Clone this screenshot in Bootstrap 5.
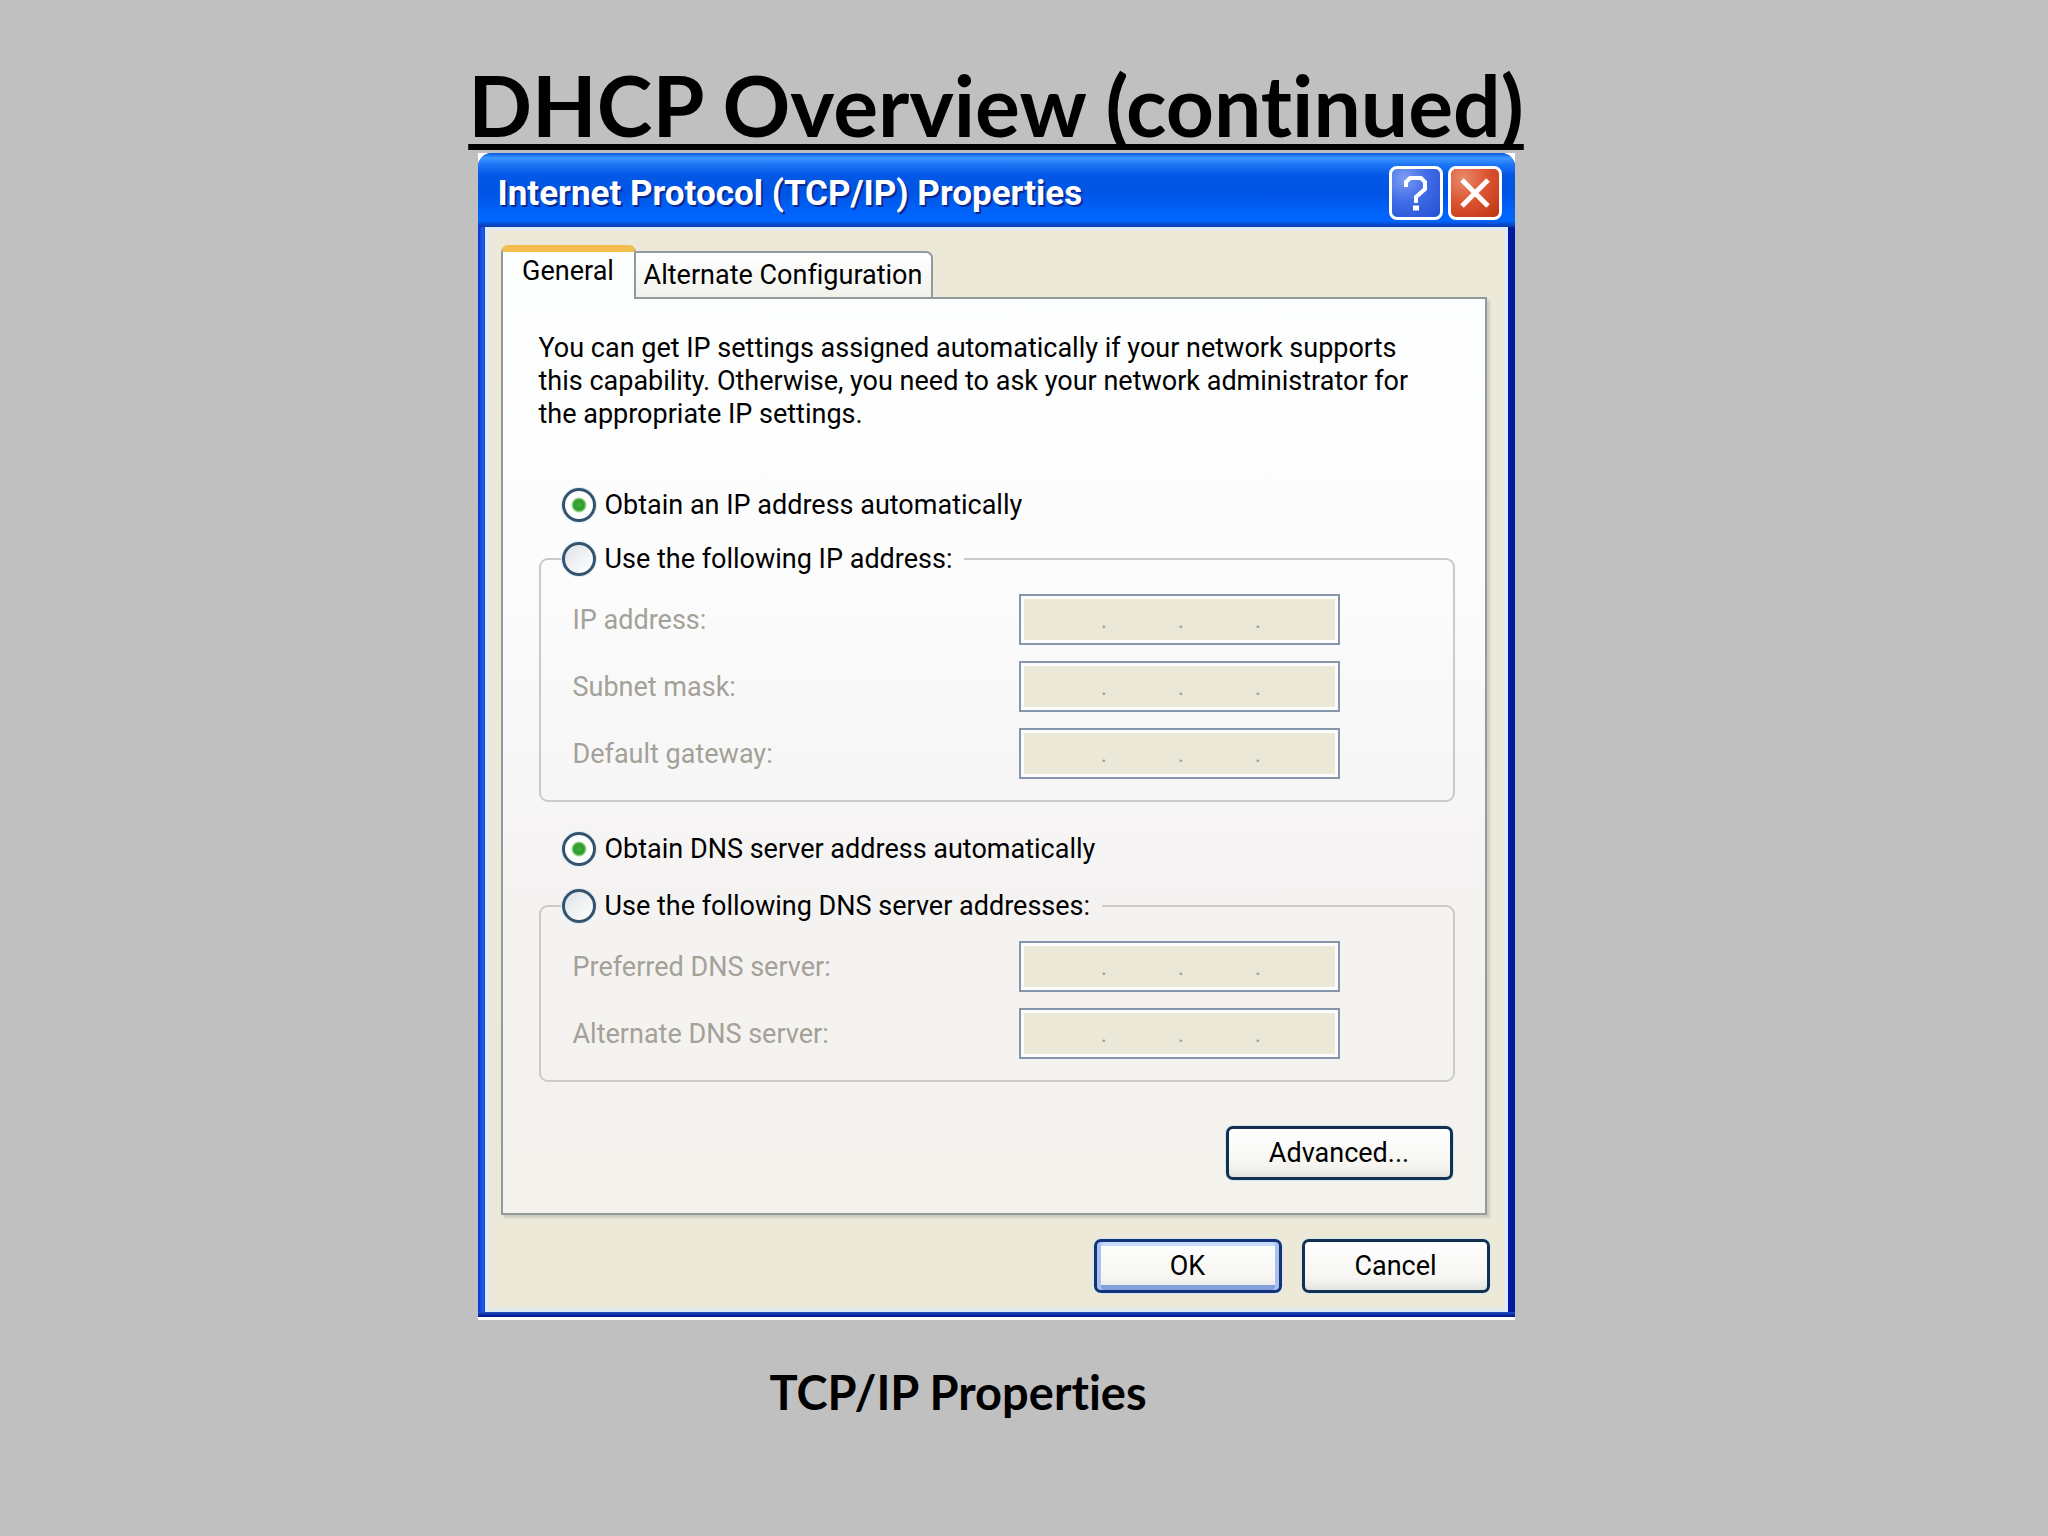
<!DOCTYPE html>
<html lang="en">
<head>
<meta charset="utf-8">
<meta name="viewport" content="width=device-width, initial-scale=1">
<title>DHCP Overview (continued)</title>
<link href="https://cdn.jsdelivr.net/npm/bootstrap@5.3.0/dist/css/bootstrap.min.css" rel="stylesheet">
<style>
  body { background: #c0c0c0; color: #000; font-family: Lato, sans-serif; font-variant-ligatures: none; }
  .slide { padding: 56px 56px 0 0; }
  .slide-title { font-size: 84px; line-height: 97px; font-weight: 700; text-decoration: underline; text-decoration-thickness: 6px; text-underline-offset: 7px; text-decoration-skip-ink: none; position: relative; z-index: 1; }
  .slide-caption { font-size: 47px; line-height: 56px; font-weight: 700; padding: 44px 76px 0 0; }

  .xp-frame { max-width: 1037px; background: #fff; padding-bottom: 3px; }
  .xp-window { font-family: Roboto, "Liberation Sans", sans-serif; font-size: 27px; line-height: 36px;
    background: linear-gradient(90deg, #0a2ed0 0, #1f5fe8 5px, #0a3fd0 7px, #0a3fd0 50%, #0019a0 100%); border-radius: 14px 14px 0 0; overflow: hidden; }
  .xp-titlebar { height: 74px; padding: 0 13px 0 20px;
    background: linear-gradient(#0b5be0 0, #3d97ff 5px, #1c74f5 12px, #0458e6 22px, #0054e3 40px, #0062fb 58px, #0066ff 68px, #0a46c4 72px, #0a3cae 74px); }
  .xp-titlebar h2 { font-size: 35px; line-height: 40px; font-weight: 700; color: #fff; text-shadow: 2px 2px 0 #0a2a90; padding-top: 8px; }
  .xp-titlebar .xp-sysrow { gap: 5px; padding-top: 5px; }
  .xp-sys { width: 54px; height: 54px; border: 3px solid #fff; border-radius: 8px; padding: 0; }
  .xp-help { background: radial-gradient(circle at 25% 20%, #7d9cf2, #3f6be6 45%, #2450d4); }
  .xp-close { background: radial-gradient(circle at 25% 20%, #e88a6a, #dd5433 45%, #bd3413); }
  .xp-body { margin: 0 7px; background: #ece9d8; padding: 15px 17px 15px 12px; border: 4px solid #dfeaf4; border-top-width: 3px; }
  .xp-base { height: 5px; background: linear-gradient(#1c4fc0, #00128c); }

  .xp-tabs { margin-bottom: -2px; position: relative; z-index: 1; }
  .xp-tab { border: 2px solid #919b9c; color: #000; background: linear-gradient(#fff, #f1f1ec); font: inherit; padding: 0; white-space: nowrap; }
  .xp-tab.active { width: 135px; height: 54px; background: #fdfefe; border-top: 7px solid #f3bd4e; border-bottom: 0; border-radius: 7px 7px 0 0; padding-bottom: 10px; }
  .xp-tab.other { width: 297px; height: 48px; border-left: 0; border-radius: 0 7px 0 0; }
  .xp-page { border: 2px solid #919b9c; background: linear-gradient(#fdfefe 0, #fcfcfd 30%, #f5f3f2 65%, #f3f2ec 100%); box-shadow: 3px 3px 2px #cfcdbf; padding: 33px 30px 33px 36px; }
  .xp-intro { max-width: 892px; line-height: 33px; margin-bottom: 56px; }

  .xp-choice { gap: 9px; height: 36px; }
  .xp-indent { padding-left: 23px; }
  .xp-radio.form-check-input { width: 34px; height: 34px; margin: 0; flex: none; border: 3px solid #33536f; background: linear-gradient(135deg, #dfe3e6, #fff); box-shadow: 0 0 0 1px #dcecf6; }
  .xp-radio.form-check-input:checked { background: radial-gradient(circle, #3fae3a 0, #2f9a2c 5px, #58b653 6px, #fff 8px); border-color: #33536f; }

  .xp-group { border: 2px solid #cbcac6; border-radius: 9px; padding: 17px 113px 21px 32px; margin: 18px 0 0; }
  .xp-group legend { font-size: inherit; line-height: inherit; margin: 0 0 0 -11px; padding-right: 12px; }
  .xp-row { color: #a3a198; }
  .xp-rows { gap: 16px; }
  .xp-ip { width: 321px; height: 51px; border: 2px solid #8797ab; padding: 0 0 0 10px; background: #ebe8d8; box-shadow: inset 0 0 0 3px #fbfcfb; }
  .xp-ip input { width: 70px; height: 34px; border: 0; background: transparent; text-align: center; padding: 0; }
  .xp-ip span { width: 7px; text-align: center; font-size: 24px; }
  .xp-dns { margin-top: 29px; }
  .xp-dns + .xp-group { margin-top: 21px; }

  .xp-btn { font: inherit; color: #000; height: 54px; border: 3px solid #12304f; border-radius: 7px; padding: 0; background: linear-gradient(#fff, #f6f5f1 75%, #e2e3e0); box-shadow: 0 0 0 1px #d6e6f0; }
  .xp-btn.main { border-color: #12337c; box-shadow: inset 4px 0 0 #a9c3ee, inset -4px 0 0 #a9c3ee, inset 0 4px 0 #c6dcf8, inset 0 -5px 0 #829fdb, 0 0 0 1px #d6e6f0; }
  .xp-adv { padding: 44px 2px 0 0; }
  .w-adv { width: 227px; }
  .w-std { width: 188px; }
  .xp-foot { gap: 20px; padding-top: 24px; margin-right: -3px; }
</style>
<script src="https://cdn.jsdelivr.net/npm/bootstrap@5.3.0/dist/js/bootstrap.bundle.min.js"></script>
</head>
<body>
<main class="slide">
  <h1 class="slide-title text-center mb-0">DHCP Overview (continued)</h1>

  <div class="xp-frame mx-auto">
    <section class="xp-window" aria-labelledby="dlgTitle">
      <header class="xp-titlebar d-flex align-items-center">
        <h2 id="dlgTitle" class="mb-0 me-auto">Internet Protocol (TCP/IP) Properties</h2>
        <div class="xp-sysrow d-flex">
          <button type="button" class="xp-sys xp-help d-flex" aria-label="Help">
            <svg width="48" height="48" viewBox="0 0 48 48" fill="none" stroke="#fff" stroke-width="4"><path d="M14 18V13L18 9H29L33 13V20L24 28V34"/><path d="M21 39H27" stroke-width="5"/></svg>
          </button>
          <button type="button" class="xp-sys xp-close d-flex" aria-label="Close">
            <svg width="48" height="48" viewBox="0 0 48 48" fill="none" stroke="#fff" stroke-width="5"><path d="M11 11L37 37M37 11L11 37"/></svg>
          </button>
        </div>
      </header>

      <form class="xp-body">
        <div class="xp-tabs d-flex align-items-end" role="tablist">
          <button type="button" class="xp-tab active" role="tab" aria-selected="true">General</button>
          <button type="button" class="xp-tab other" role="tab" aria-selected="false">Alternate Configuration</button>
        </div>

        <div class="xp-page" role="tabpanel">
          <p class="xp-intro">You can get IP settings assigned automatically if your network supports this capability. Otherwise, you need to ask your network administrator for the appropriate IP settings.</p>

          <div class="xp-choice xp-indent d-flex align-items-center">
            <input class="xp-radio form-check-input" type="radio" name="ip" id="ipAuto" checked>
            <label for="ipAuto">Obtain an IP address automatically</label>
          </div>
          <fieldset class="xp-group">
            <legend class="float-none w-auto">
              <span class="xp-choice d-flex align-items-center">
                <input class="xp-radio form-check-input" type="radio" name="ip" id="ipManual">
                <label for="ipManual">Use the following IP address:</label>
              </span>
            </legend>
            <div class="xp-rows d-flex flex-column">
              <div class="xp-row d-flex align-items-center justify-content-between">
                <label for="ip1">IP address:</label>
                <div class="xp-ip d-flex align-items-center"><input id="ip1" disabled><span>.</span><input aria-label="Octet 2" disabled><span>.</span><input aria-label="Octet 3" disabled><span>.</span><input aria-label="Octet 4" disabled></div>
              </div>
              <div class="xp-row d-flex align-items-center justify-content-between">
                <label for="mask1">Subnet mask:</label>
                <div class="xp-ip d-flex align-items-center"><input id="mask1" disabled><span>.</span><input aria-label="Octet 2" disabled><span>.</span><input aria-label="Octet 3" disabled><span>.</span><input aria-label="Octet 4" disabled></div>
              </div>
              <div class="xp-row d-flex align-items-center justify-content-between">
                <label for="gw1">Default gateway:</label>
                <div class="xp-ip d-flex align-items-center"><input id="gw1" disabled><span>.</span><input aria-label="Octet 2" disabled><span>.</span><input aria-label="Octet 3" disabled><span>.</span><input aria-label="Octet 4" disabled></div>
              </div>
            </div>
          </fieldset>

          <div class="xp-choice xp-indent xp-dns d-flex align-items-center">
            <input class="xp-radio form-check-input" type="radio" name="dns" id="dnsAuto" checked>
            <label for="dnsAuto">Obtain DNS server address automatically</label>
          </div>
          <fieldset class="xp-group">
            <legend class="float-none w-auto">
              <span class="xp-choice d-flex align-items-center">
                <input class="xp-radio form-check-input" type="radio" name="dns" id="dnsManual">
                <label for="dnsManual">Use the following DNS server addresses:</label>
              </span>
            </legend>
            <div class="xp-rows d-flex flex-column">
              <div class="xp-row d-flex align-items-center justify-content-between">
                <label for="dnsA">Preferred DNS server:</label>
                <div class="xp-ip d-flex align-items-center"><input id="dnsA" disabled><span>.</span><input aria-label="Octet 2" disabled><span>.</span><input aria-label="Octet 3" disabled><span>.</span><input aria-label="Octet 4" disabled></div>
              </div>
              <div class="xp-row d-flex align-items-center justify-content-between">
                <label for="dnsB">Alternate DNS server:</label>
                <div class="xp-ip d-flex align-items-center"><input id="dnsB" disabled><span>.</span><input aria-label="Octet 2" disabled><span>.</span><input aria-label="Octet 3" disabled><span>.</span><input aria-label="Octet 4" disabled></div>
              </div>
            </div>
          </fieldset>

          <div class="xp-adv d-flex justify-content-end">
            <button type="button" class="xp-btn w-adv">Advanced...</button>
          </div>
        </div>

        <div class="xp-foot d-flex justify-content-end">
          <button type="submit" class="xp-btn main w-std">OK</button>
          <button type="button" class="xp-btn w-std">Cancel</button>
        </div>
      </form>
      <div class="xp-base"></div>
    </section>
  </div>

  <p class="slide-caption text-center mb-0">TCP/IP Properties</p>
</main>
</body>
</html>
